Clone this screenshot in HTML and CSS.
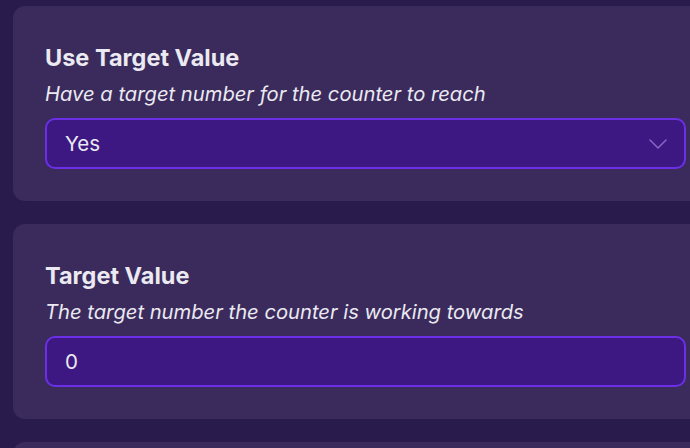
FILE: index.html
```html
<!DOCTYPE html>
<html>
<head>
<meta charset="utf-8">
<link rel="stylesheet" href="styles.css">
</head>
<body>
<div class="page">
  <section class="card">
    <h2 class="title">Use Target Value</h2>
    <p class="desc">Have a target number for the counter to reach</p>
    <div class="field select">
      <span class="value">Yes</span>
      <svg class="chev" width="18" height="10" viewBox="0 0 18 10"><path d="M1 1 L9 9 L17 1" fill="none" stroke="#8667c4" stroke-width="1.5" stroke-linecap="round" stroke-linejoin="round"/></svg>
    </div>
  </section>
  <section class="card">
    <h2 class="title">Target Value</h2>
    <p class="desc">The target number the counter is working towards</p>
    <div class="field">
      <span class="value">0</span>
    </div>
  </section>
  <section class="card"></section>
</div>
</body>
</html>
```
FILE: styles.css
```css
html, body {
  margin: 0;
  padding: 0;
  background: #291b4b;
  overflow: hidden;
  height: 448px;
}
body {
  font-family: Inter, "Noto Sans", sans-serif;
  color: #ebe9f1;
}
.page {
  display: flex;
  flex-direction: column;
  gap: 23px;
  padding: 6px 0 0 13px;
  width: 705px;
}
.card {
  background: #3a2b5c;
  border-radius: 12px;
  padding: 38px 32px 32px 32px;
  min-height: 125px;
}
.title {
  margin: 0;
  font-size: 23.5px;
  line-height: 28px;
  font-weight: 700;
}
.desc {
  margin: 9px 0 0 0;
  font-size: 20.2px;
  line-height: 26px;
  font-style: italic;
  font-weight: 400;
}
.field {
  margin-top: 11px;
  height: 47px;
  border: 2px solid #6b2fe6;
  border-radius: 10px;
  background: #3d1883;
  display: flex;
  align-items: center;
  padding: 0 17px 0 18px;
  justify-content: space-between;
}
.value {
  font-size: 20.5px;
}
```
